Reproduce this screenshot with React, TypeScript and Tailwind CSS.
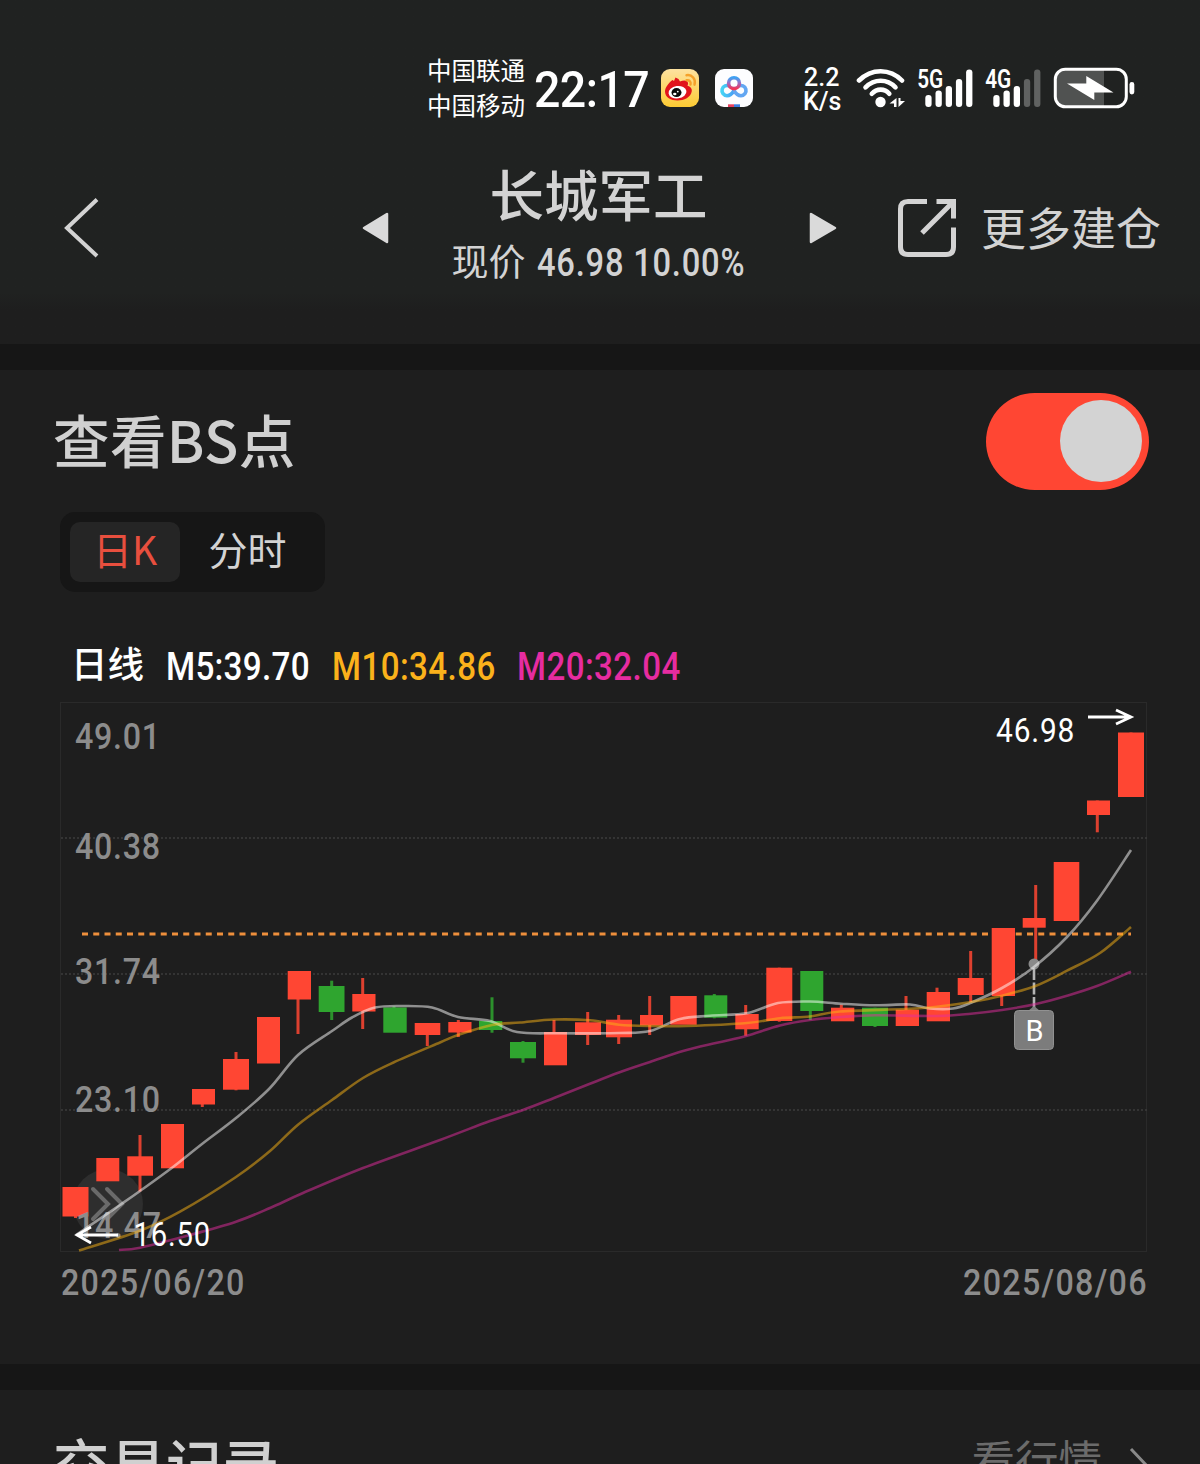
type Point = [number, number]

// [left, right, bodyTop, bodyBottom, wickX, high, low, isUp]
type Candle = [number, number, number, number, number, number, number, boolean]

const candles: Candle[] = [
    [62.5, 88.5, 1187, 1216.5, 75.5, 1187, 1218, true],
    [96.3, 119.3, 1158, 1181.3, 107.5, 1158, 1181, true],
    [127.3, 153, 1156.3, 1175.7, 140, 1135, 1191.5, true],
    [161, 184, 1124, 1168.3, 172.5, 1124, 1168, true],
    [192, 215, 1089, 1104.5, 202.3, 1089, 1107, true],
    [223, 249, 1059, 1089.7, 236, 1052, 1090.3, true],
    [257, 280, 1017, 1063.5, 268.5, 1017, 1063, true],
    [287.7, 311, 971, 999.5, 298, 971, 1034, true],
    [318.7, 344.5, 986, 1012, 331.7, 980.7, 1020, false],
    [352.3, 375.5, 994, 1011.5, 362.7, 978, 1029, true],
    [383.3, 406.7, 1007.5, 1032.7, 394, 1006.5, 1032, false],
    [414.7, 440.3, 1023, 1035, 427.3, 1023, 1046, true],
    [448.3, 471.5, 1022, 1032.5, 458.3, 1020, 1037, true],
    [479, 502.3, 1021, 1030, 492, 997.3, 1032.7, false],
    [510, 536, 1042, 1058.3, 523, 1041, 1062.7, false],
    [544, 567, 1032, 1065.3, 554, 1020, 1065, true],
    [575, 601, 1022.3, 1035, 587.7, 1012, 1045, true],
    [606, 632, 1019.7, 1037.3, 618.7, 1015, 1044, true],
    [640, 663, 1015, 1025.3, 649.7, 996, 1035, true],
    [670.3, 696.7, 996, 1024.7, 683, 996, 1024, true],
    [704.3, 727.3, 995.3, 1017.7, 714.3, 994, 1018.3, false],
    [735.3, 758.7, 1014, 1029.3, 745.7, 1005, 1035.7, true],
    [766.3, 792.3, 967.7, 1021, 779.3, 967.7, 1021.7, true],
    [800.3, 823.3, 971, 1011, 810.3, 971, 1020, false],
    [831, 854.3, 1007.7, 1021.3, 841.3, 1004.7, 1021, true],
    [862, 888, 1007.7, 1026, 875, 1007.7, 1027, false],
    [895.7, 919, 1009.7, 1026, 906, 996, 1026, true],
    [926.7, 950, 992, 1021.3, 937, 987.7, 1021, true],
    [957.7, 983.7, 978, 995, 970.7, 951, 1002, true],
    [991.7, 1015, 928, 996, 1001.7, 928, 1006, true],
    [1022.7, 1045.7, 918, 927.7, 1035.7, 885, 967.7, true],
    [1053.7, 1079.3, 862, 921, 1066, 862, 921, true],
    [1087, 1110, 800.5, 815, 1097.3, 800.5, 832.3, true],
    [1118, 1144, 732.5, 797, 1131, 732.5, 797, true],
]

const ma5: Point[] = [
    [76, 1235], [120, 1205], [140, 1191], [173, 1167], [202, 1144], [236, 1118], [269, 1089],
    [298, 1055], [332, 1031], [352, 1017.5], [375, 1007.5], [403, 1006], [432, 1007.5], [458, 1017],
    [490, 1021], [517, 1032], [557, 1033.3], [619, 1033], [650, 1031], [680, 1019], [710, 1015.7],
    [748, 1013], [778, 1003], [810, 1001.5], [841, 1003.7], [875, 1005.3], [910, 1004.5],
    [930, 1008.5], [953, 1008.5], [971, 1002.7], [1002, 988], [1033, 967.7], [1067, 937],
    [1097, 900.7], [1131, 850],
]

const ma10: Point[] = [
    [79, 1250.5], [140, 1230.7], [180, 1211.7], [236, 1177], [270, 1151], [298, 1124.7], [332, 1100],
    [363, 1078], [393, 1062.7], [440, 1042.5], [458, 1035], [492, 1025], [520, 1022.5], [554, 1019.5],
    [590, 1020.3], [619, 1024.7], [650, 1026], [687, 1026], [747, 1023], [780, 1018.2], [810, 1016.5],
    [840, 1011.5], [906, 1009], [937, 1006.7], [971, 1002], [1002, 995.7], [1036, 985.7],
    [1067, 970.7], [1100, 953], [1131, 927],
]

const ma20: Point[] = [
    [119, 1250], [140, 1247.7], [190, 1235], [236, 1221.7], [270, 1208], [303, 1193], [363, 1168],
    [440, 1140], [490, 1121], [523, 1110], [554, 1098], [588, 1084.5], [619, 1072.5], [650, 1062],
    [683, 1051], [717, 1042.7], [746, 1036], [780, 1025.5], [810, 1020], [841, 1017], [875, 1015.3],
    [937, 1016], [971, 1013.7], [1002, 1010], [1036, 1004], [1067, 995.7], [1097, 986], [1131, 971.7],
]

function smooth(pts: Point[]) {
    let d = `M${pts[0][0]} ${pts[0][1]}`
    for (let i = 0; i < pts.length - 1; i++) {
        const p0 = pts[i - 1] ?? pts[i]
        const p1 = pts[i]
        const p2 = pts[i + 1]
        const p3 = pts[i + 2] ?? p2
        d += ` C${p1[0] + (p2[0] - p0[0]) / 6} ${p1[1] + (p2[1] - p0[1]) / 6} ${p2[0] - (p3[0] - p1[0]) / 6} ${p2[1] - (p3[1] - p1[1]) / 6} ${p2[0]} ${p2[1]}`
    }
    return d
}

function WeiboIcon() {
    return (
        <svg className="h-[38px] w-[38px] shrink-0" viewBox="0 0 38 38">
            <defs>
                <linearGradient id="weibo-bg" x1="0" y1="0" x2="0" y2="1">
                    <stop offset="0" stopColor="#fde2a0" />
                    <stop offset="1" stopColor="#fdcb33" />
                </linearGradient>
            </defs>
            <rect width="38" height="38" rx="9" fill="url(#weibo-bg)" />
            <path d="M4 22.500c0-4 4-9 7.500-11.500l1.500 1 1.500-3.500 3 1.500 1.500 2.500c3.500-1.500 7.500-1.500 8 1.500.2 1-.3 2-.5 2.800 2.800.9 4.700 2.700 4.300 5.200C30 28.500 23 31.500 16.500 31.500S4 28.500 4 22.500z" fill="#e1141c" />
            <ellipse cx="16.500" cy="23.200" rx="9" ry="6.200" transform="rotate(-8 16.500 23.200)" fill="#fff" />
            <ellipse cx="15.500" cy="23.600" rx="5" ry="4.500" fill="#0a0a0a" />
            <ellipse cx="13.800" cy="25" rx="1.700" ry="1.300" fill="#fff" />
            <circle cx="16.800" cy="22.600" r=".9" fill="#fff" />
            <path d="M25.500 11.300c3-.6 4.700 1.600 4 4.200M25.500 6.200c5.500-1 9.600 4 8 9.500" fill="none" stroke="#f5a12a" strokeWidth="2.400" strokeLinecap="round" />
        </svg>
    )
}

function NetdiskIcon() {
    return (
        <svg className="h-[38px] w-[38px] shrink-0" viewBox="0 0 38 38">
            <defs>
                <linearGradient id="disk-l" x1="0" y1="0" x2="1" y2="0">
                    <stop offset="0" stopColor="#45d3f5" />
                    <stop offset="1" stopColor="#4a9df5" />
                </linearGradient>
                <linearGradient id="disk-t" x1="0" y1="0" x2="0" y2="1">
                    <stop offset="0" stopColor="#3fa0f2" />
                    <stop offset=".5" stopColor="#a06cc0" />
                    <stop offset="1" stopColor="#f0365a" />
                </linearGradient>
            </defs>
            <rect width="38" height="38" rx="9" fill="#fdfdff" />
            <path d="M19 21.500c-2 3.500-4.200 5.200-7 5.200a5.100 5.100 0 1 1 2.500-9.600" fill="none" stroke="url(#disk-l)" strokeWidth="3.600" />
            <path d="M19 21.500c2 3.500 4.200 5.200 7 5.200a5.100 5.100 0 1 0-2.500-9.600" fill="none" stroke="#62a6f2" strokeWidth="3.600" />
            <circle cx="19" cy="14.200" r="5.400" fill="none" stroke="url(#disk-t)" strokeWidth="3.600" />
            <path d="M13 35.300h6V38h-6z" fill="#e8415f" />
            <path d="M19 35.300h6V38h-6z" fill="#3a7de0" />
        </svg>
    )
}

function WifiIcon() {
    return (
        <svg className="h-[40px] w-[50px] shrink-0" viewBox="856 68 50 40">
            <g fill="none" stroke="#fff" strokeWidth="4.600" strokeLinecap="round">
                <path d="M859 80.500c12.500-12.400 31-12.400 43 0" />
                <path d="M865.500 87.300c9-8.700 21.500-8.700 30 0" />
                <path d="M871.800 93.700c5-5.500 12.800-5.500 17.500 0" />
            </g>
            <circle cx="880.500" cy="102" r="5.200" fill="#fff" />
            <path d="M896.500 98v9h-2.500v-3.500h-4.500zM898.500 107v-9h2v3h4.500z" fill="#fff" />
        </svg>
    )
}

function Signal({ label, level }: { label: string; level: number }) {
    const tops = [95, 90.5, 86, 79, 69.500]
    return (
        <svg className="h-[48px] w-[62px] shrink-0" viewBox="914 64 62 48">
            <text transform="translate(917.200 88) scale(.8 1)" className="fill-white font-['Roboto'] text-[26px] font-semibold">
                {label}
            </text>
            {tops.map((top, i) => (
                <rect key={top} x={925.3 + i * 10.2} y={top} width="6.300" height={107 - top} rx="3" fill={i < level ? '#fff' : '#606261'} />
            ))}
        </svg>
    )
}

function BatteryIcon() {
    return (
        <svg className="h-[42px] w-[82px] shrink-0" viewBox="1053 67 82 42">
            <path d="M1065 70h39v37h-39q-9 0-9-9V79q0-9 9-9z" fill="#505251" />
            <rect x="1055.300" y="69.200" width="71" height="37.600" rx="10" fill="none" stroke="#fff" strokeWidth="3" />
            <rect x="1129.500" y="82" width="4.800" height="12.500" rx="2.400" fill="#fff" />
            <path d="M1067 83.500h19.300V76l27.200 16.500h-19.200v7.500z" fill="#fff" />
        </svg>
    )
}

function StatusBar() {
    return (
        <div className="flex h-[176px] items-center pl-[427px] text-white">
            <div className="-mt-[2px] w-[107px] whitespace-nowrap text-[24.500px] leading-[35px]">
                <div>中国联通</div>
                <div>中国移动</div>
            </div>
            <div className="mt-1 w-[127px] origin-left scale-x-[.93] whitespace-nowrap font-['Roboto'] text-[50px] font-medium leading-none tracking-[-.6px]">22:17</div>
            <WeiboIcon />
            <div className="w-4" />
            <NetdiskIcon />
            <div className="ml-[50px] mt-[3px] w-[53px] font-['Roboto'] text-[25px] font-medium">
                <div className="pl-[1px] leading-[24px]">2.2</div>
                <div className="leading-[24px]">K/s</div>
            </div>
            <WifiIcon />
            <div className="ml-[8px]">
                <Signal label="5G" level={5} />
            </div>
            <div className="ml-[6px]">
                <Signal label="4G" level={3} />
            </div>
            <div className="ml-[9px]">
                <BatteryIcon />
            </div>
        </div>
    )
}

function NavBar() {
    return (
        <div className="flex h-[103px] items-center pl-[62px] text-[#d3d3d3]">
            <svg className="h-[64px] w-[40px] shrink-0" viewBox="62 196 40 64">
                <path d="M97 199.500 67 228l30 28" fill="none" stroke="#d3d3d3" strokeWidth="4" />
            </svg>
            <svg className="ml-[260px] h-[34px] w-[28px] shrink-0" viewBox="0 0 28 34">
                <path d="M25 3v28L2 17z" fill="#dadada" stroke="#dadada" strokeWidth="2.500" strokeLinejoin="round" />
            </svg>
            <div className="w-[419px] shrink-0 whitespace-nowrap pr-[2px] text-center">
                <div className="-mt-[4px] text-[54.500px] font-medium leading-[66px]">长城军工</div>
                <div className="flex items-center justify-center pt-[3px] text-[37px] leading-[56px]">
                    <span className="mr-[11px]">现价</span>
                    <span className="w-[209px] origin-left scale-x-[.86] pt-[6px] text-left font-['Roboto'] text-[38px] font-medium tracking-[.9px]">46.98 10.00%</span>
                </div>
            </div>
            <svg className="h-[34px] w-[28px] shrink-0" viewBox="0 0 28 34">
                <path d="M2 3v28l24-14z" fill="#dadada" stroke="#dadada" strokeWidth="2.500" strokeLinejoin="round" />
            </svg>
            <svg className="ml-[60px] h-[60px] w-[60px] shrink-0" viewBox="0 0 60 60">
                <g fill="none" stroke="#d3d3d3" strokeWidth="5">
                    <path d="M30 3.500H11Q3.500 3.500 3.500 11v38q0 7.500 7.500 7.500h38q7.500 0 7.500-7.500V29.500" />
                    <path d="M39.500 3.500h17v17M55 5 25 35" />
                </g>
            </svg>
            <div className="-mt-[2px] ml-[24px] whitespace-nowrap text-[45px] leading-none">更多建仓</div>
        </div>
    )
}

function AxisLabel({ x, y, children }: { x: number; y: number; children: string }) {
    return (
        <text transform={`translate(${x} ${y}) scale(.86 1)`} className="fill-[#8c8c8c] font-['Roboto'] text-[37.500px] font-medium tracking-[.8px]">
            {children}
        </text>
    )
}

function KLineChart() {
    return (
        <svg className="block h-[550px] w-[1087px]" viewBox="60 702 1087 550">
            <rect x="60.500" y="702.500" width="1086" height="549" fill="none" stroke="#2a2a2a" />
            <g stroke="#3c3c3c" strokeWidth="1.500" strokeDasharray="2 2">
                <path d="M61 838h1086M61 974h1086M61 1110h1086" />
            </g>
            <circle cx="108" cy="1204" r="35" fill="#2e2e2e" />
            <path d="m93 1189 15 15-15 15M107 1189l15 15-15 15" fill="none" stroke="#6a6a6a" strokeWidth="4" strokeLinecap="round" />
            <path d="M82 934h1049" stroke="#ee8f3c" strokeWidth="3" strokeDasharray="6 5.250" />

            {candles.map(([left, right, top, bottom, wick, high, low, up]) => (
                <g key={left} fill={up ? '#ff4633' : '#2fa52f'}>
                    <rect x={wick - 1.5} y={high} width="3" height={low - high} opacity=".85" />
                    <rect x={left} y={top} width={right - left} height={bottom - top} />
                </g>
            ))}

            <AxisLabel x={75} y={748.7}>49.01</AxisLabel>
            <AxisLabel x={75} y={858.7}>40.38</AxisLabel>
            <AxisLabel x={75} y={983.7}>31.74</AxisLabel>
            <AxisLabel x={75} y={1111.7}>23.10</AxisLabel>
            <AxisLabel x={76} y={1238.3}>14.47</AxisLabel>

            {/* Entry marker */}
            <circle cx="1034" cy="964" r="5.500" fill="#8a8a8a" />
            <path d="M1034 968v42" stroke="#b5b5b5" strokeWidth="2.600" strokeDasharray="12 2.500" />
            <path d="m1028 1011 6-5 6 5z" fill="#7f7f7f" />
            <rect x="1014.500" y="1010.500" width="39" height="39" rx="4" fill="#7c7c7c" stroke="#919191" />
            <text x="1034.500" y="1041" textAnchor="middle" className="fill-white font-['Roboto'] text-[29px]">B</text>

            <g fill="none" strokeWidth="2.600">
                <path d={smooth(ma5)} stroke="#fff" strokeOpacity=".5" />
                <path d={smooth(ma10)} stroke="#fbb414" strokeOpacity=".5" />
                <path d={smooth(ma20)} stroke="#e62ca0" strokeOpacity=".5" />
            </g>

            <g fill="none" stroke="#fff" strokeWidth="2.800">
                <path d="M1088 717h42M1116 710l15 7-15 7" />
                <path d="M118 1235H77M91 1227l-14 8 14 8" />
            </g>
            <g className="fill-white font-['Roboto'] text-[32.500px]">
                <text transform="translate(996 742) scale(.92 1)" className="tracking-[.9px]">46.98</text>
                <text transform="translate(133.500 1246) scale(.9 1)" className="tracking-[.9px]">16.50</text>
            </g>
        </svg>
    )
}

export default function App() {
    return (
        <div className="h-[1464px] w-[1200px] overflow-hidden bg-[#1e1e1e] font-['Noto_Sans_CJK_SC',sans-serif]">
            <header className="h-[344px] bg-linear-to-b from-[#202221] from-85% to-[#1e1e1e] to-90%">
                <StatusBar />
                <NavBar />
            </header>
            <div className="h-[26px] bg-[#161616]" />

            <section className="h-[994px] pt-[22px]">
                <div className="flex h-[98px] items-center justify-between pl-[53px] pr-[51px]">
                    <h2 className="-mt-[5px] whitespace-nowrap text-[56.500px] font-medium leading-none tracking-[.4px] text-[#d0d0d0]">查看BS点</h2>
                    <div className="flex h-[97px] w-[163px] items-center justify-end rounded-full bg-[#ff4633] pr-[7px]">
                        <div className="size-[82px] rounded-full bg-[#d3d3d3]" />
                    </div>
                </div>

                <div className="ml-[60px] mt-[22px] flex h-[80px] w-[265px] rounded-[15px] bg-[#161616] p-[10px] text-[39px]">
                    <div className="h-[60px] w-[110px] rounded-[10px] bg-[#252525] text-center leading-[52px] text-[#e84f3e]">日K</div>
                    <div className="w-[135px] text-center leading-[52px] text-[#d3d3d3]">分时</div>
                </div>

                <div className="ml-[71px] mt-[45px] flex h-[60px] items-center whitespace-nowrap font-['Roboto'] text-[38.500px] font-medium leading-none">
                    <div className="-mt-[8px] w-[95px] font-['Noto_Sans_CJK_SC',sans-serif] text-[36.500px] text-white">日线</div>
                    <div className="w-[166px] origin-left scale-x-[.865] tracking-[.3px] text-white">M5:39.70</div>
                    <div className="w-[185px] origin-left scale-x-[.86] tracking-[.5px] text-[#fbb21b]">M10:34.86</div>
                    <div className="origin-left scale-x-[.86] tracking-[.5px] text-[#e62ca0]">M20:32.04</div>
                </div>

                <div className="ml-[60px] mt-[5px]">
                    <KLineChart />
                </div>
                <div className="ml-[61px] flex h-[62px] w-[1087px] items-center justify-between font-['Roboto'] text-[37.500px] font-medium leading-none tracking-[1.500px] text-[#8c8c8c]">
                    <span className="origin-left scale-x-[.86]">2025/06/20</span>
                    <span className="origin-right scale-x-[.86]">2025/08/06</span>
                </div>
            </section>

            <div className="h-[26px] bg-[#161616]" />
            <section className="flex pl-[53px] pt-[34px]">
                <h2 className="text-[56.500px] font-medium leading-[76px] text-[#d0d0d0]">交易记录</h2>
                <div className="ml-auto mr-[27px] mt-[4px] text-[43.500px] leading-[62px] text-[#6b6b6b]">看行情</div>
                <svg className="mr-[50px] mt-[22px] h-[42px] w-[21px]" viewBox="0 0 21 42">
                    <path d="m2 3 17 18L2 39" fill="none" stroke="#8a8a8a" strokeWidth="3" />
                </svg>
            </section>
        </div>
    )
}
